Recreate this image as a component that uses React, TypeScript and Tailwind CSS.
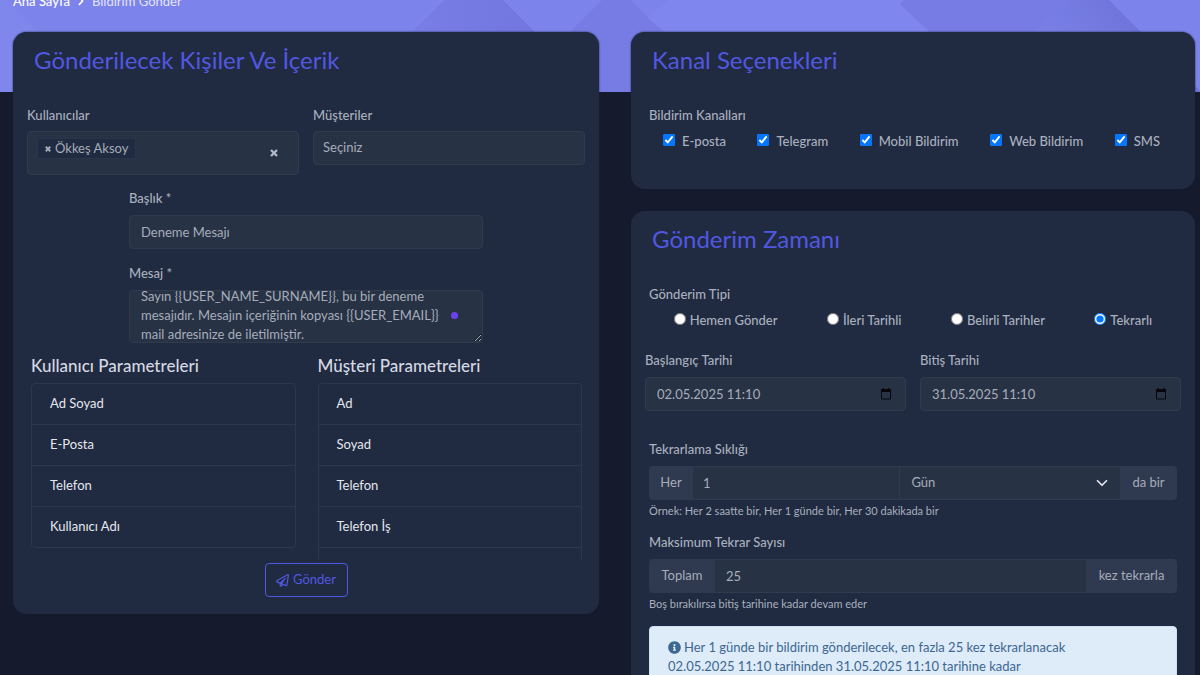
import { useEffect, useRef, useState } from "react";
import type { ReactNode } from "react";
import { FaChevronRight, FaInfoCircle, FaRegPaperPlane } from "react-icons/fa";

const channels = ["E-posta", "Telegram", "Mobil Bildirim", "Web Bildirim", "SMS"];
const sendTypes = ["Hemen Gönder", "İleri Tarihli", "Belirli Tarihler", "Tekrarlı"];
const userParams = ["Ad Soyad", "E-Posta", "Telefon", "Kullanıcı Adı"];
const customerParams = ["Ad", "Soyad", "Telefon", "Telefon İş", "E-Posta"];

const control =
  "h-[34px] w-full rounded-[4px] border border-[#303b4e] bg-[#283245] text-[13px] text-[#a6adba] outline-none focus:border-[#5158e0]";
const label = "block text-[13px] leading-[18px] font-medium text-[#a9b0bf]";
const addon =
  "flex h-[34px] shrink-0 items-center justify-center bg-[#2f394f] text-[13px] text-[#a6adba]";

function Card({ title, children }: { title: string; children: ReactNode }) {
  return (
    <section className="rounded-[14px] bg-[#202a40] shadow-[0_0_2px_#1a2236]">
      <h2 className="px-[21px] pt-[14px] text-[24px] leading-[28px] text-[#5158e0]">
        {title}
      </h2>
      {children}
    </section>
  );
}

function CloseIcon({ className }: { className: string }) {
  return (
    <svg className={className} viewBox="0 0 8 8" fill="none" stroke="currentColor">
      <path d="M1 1l6 6M7 1l-6 6" strokeWidth="2.4" />
    </svg>
  );
}

// Faceted pattern behind the page header
function HeaderPattern() {
  return (
    <svg
      className="absolute inset-0 h-full w-full"
      viewBox="0 0 1200 92"
      preserveAspectRatio="none"
    >
      <defs>
        <linearGradient id="facet">
          <stop offset="0.3" stopColor="#777de5" />
          <stop offset="1" stopColor="#6d73da" />
        </linearGradient>
        <linearGradient id="facetLight" x1="0" y1="1" x2="1" y2="0.7">
          <stop offset="0.2" stopColor="#7b82ea" />
          <stop offset="0.6" stopColor="#757ce2" />
          <stop offset="1" stopColor="#6a70d6" />
        </linearGradient>
      </defs>
      <path d="M0 0h7l92 92H0z" fill="#8087ec" />
      <path d="M444 0h59l92 92H352z" fill="url(#facet)" />
      <path d="M602 0h29l92 92H510z" fill="#767ce4" />
      <path d="M667 0h235l92 92H740L648 18z" fill="#7f86ee" />
      <path d="M904 0h163l-92 92h17l-92-88z" fill="#767ce4" />
      <path d="M1067 0h42l92 92H975z" fill="url(#facetLight)" />
    </svg>
  );
}

function ParamList({ title, items }: { title: string; items: string[] }) {
  return (
    <div>
      <h3 className="text-[17px] leading-[20px] font-medium text-[#d5d9e4]">{title}</h3>
      <div className="mt-[7px] h-[177px] overflow-hidden">
        <ul className="rounded-[4px] border border-[#2d374c]">
          {items.map((item) => (
            <li key={item} className="border-b border-[#2d374c] last:border-b-0">
              <button
                type="button"
                className="block h-10 w-full px-[18px] text-left text-[13px] text-[#e4e7ee]"
              >
                {item}
              </button>
            </li>
          ))}
        </ul>
      </div>
    </div>
  );
}

function DateField({ id, title, value }: { id: string; title: string; value: string }) {
  const [date, setDate] = useState(value);
  return (
    <div>
      <label htmlFor={id} className={label}>
        {title}
      </label>
      <div className="relative mt-2">
        <input
          id={id}
          type="text"
          value={date}
          onChange={(e) => setDate(e.target.value)}
          className={`${control} pr-9 pl-[11px]`}
        />
        <button type="button" aria-label={title} className="absolute top-[11px] right-[14px]">
          <svg className="h-3 w-3" viewBox="0 0 12 12" fill="#05070c">
            <path d="M2.5 0h1.4v1h4.2V0h1.4v1H10a1 1 0 0 1 1 1v8.5a1 1 0 0 1-1 1H2a1 1 0 0 1-1-1V2a1 1 0 0 1 1-1h.5zM2 4v6.5h8V4z" />
          </svg>
        </button>
      </div>
    </div>
  );
}

function RecipientsForm() {
  const messageRef = useRef<HTMLTextAreaElement>(null);
  const [users, setUsers] = useState(["Ökkeş Aksoy"]);

  useEffect(() => {
    if (messageRef.current) messageRef.current.scrollTop = 10;
  }, []);

  return (
    <form className="px-[14px] pb-[17px]" onSubmit={(e) => e.preventDefault()}>
      <div className="mt-8 grid grid-cols-2 items-start gap-[14px]">
        <div>
          <span className={label}>Kullanıcılar</span>
          <div className="mt-[7px] flex h-11 items-center justify-between rounded-[4px] border border-[#303b4e] bg-[#283245] pr-5 pl-[9px]">
            <div className="flex gap-1 self-start pt-[6px]">
              {users.map((user) => (
                <span
                  key={user}
                  className="flex h-[21px] items-center gap-1 rounded-[2px] border border-[#2b354a] bg-[#202a40] px-[7px] text-[13px] text-[#a6adba]"
                >
                  <button
                    type="button"
                    aria-label={`${user} kaldır`}
                    onClick={() => setUsers(users.filter((u) => u !== user))}
                  >
                    <CloseIcon className="h-[6px] w-[6px]" />
                  </button>
                  {user}
                </span>
              ))}
            </div>
            <button
              type="button"
              aria-label="Temizle"
              className="text-[#b3b9c6]"
              onClick={() => setUsers([])}
            >
              <CloseIcon className="h-2 w-2" />
            </button>
          </div>
        </div>
        <div>
          <label htmlFor="customers" className={label}>
            Müşteriler
          </label>
          <select id="customers" className={`${control} mt-[7px] appearance-none px-[9px]`}>
            <option>Seçiniz</option>
          </select>
        </div>
      </div>

      <div className="px-[102px] pt-[14px]">
        <label htmlFor="subject" className={label}>
          Başlık *
        </label>
        <input
          id="subject"
          type="text"
          defaultValue="Deneme Mesajı"
          className={`${control} mt-2 px-[11px]`}
        />
        <label htmlFor="message" className={`${label} mt-[15px]`}>
          Mesaj *
        </label>
        <div className="relative mt-2">
          <textarea
            id="message"
            ref={messageRef}
            defaultValue="Sayın {{USER_NAME_SURNAME}}, bu bir deneme mesajıdır. Mesajın içeriğinin kopyası {{USER_EMAIL}} mail adresinize de iletilmiştir."
            className="block h-[53px] w-full rounded-[4px] border border-[#303b4e] bg-[#283245] py-[6px] pr-6 pl-[11px] text-[13px] leading-[19px] text-[#a6adba] outline-none [scrollbar-width:none]"
          />
          <span className="absolute top-[22px] right-[25px] h-[7px] w-[7px] rounded-full bg-[#6c43ee]" />
        </div>
      </div>

      <div className="mt-[13px] grid grid-cols-2 gap-[22px] pr-[3px] pl-1">
        <ParamList title="Kullanıcı Parametreleri" items={userParams} />
        <ParamList title="Müşteri Parametreleri" items={customerParams} />
      </div>

      <div className="mt-[3px] flex justify-center">
        <button
          type="submit"
          className="flex h-[34px] w-[83px] items-center justify-center gap-1 rounded-[4px] border border-[#5158e0] text-[13px] text-[#5158e0]"
        >
          <FaRegPaperPlane className="h-[13px] w-[13px]" />
          Gönder
        </button>
      </div>
    </form>
  );
}

function ChannelOptions() {
  return (
    <form className="px-[18px] pt-8 pb-[39px]" onSubmit={(e) => e.preventDefault()}>
      <span id="channels" className={label}>
        Bildirim Kanalları
      </span>
      <div
        role="group"
        aria-labelledby="channels"
        className="mt-2 flex justify-between pr-[17px] pl-[14px]"
      >
        {channels.map((channel) => (
          <label
            key={channel}
            className="flex items-start gap-[7px] text-[13px] leading-[18px] font-medium text-[#a9b0bf]"
          >
            <input type="checkbox" defaultChecked className="mt-[2px] h-3 w-3" />
            {channel}
          </label>
        ))}
      </div>
    </form>
  );
}

function ScheduleForm() {
  const [sendType, setSendType] = useState("Tekrarlı");

  return (
    <form className="pb-8" onSubmit={(e) => e.preventDefault()}>
      <div className="px-[18px] pt-8">
        <span id="send-type" className={label}>
          Gönderim Tipi
        </span>
        <div role="radiogroup" aria-labelledby="send-type" className="mt-2 flex justify-around">
          {sendTypes.map((type) => (
            <label
              key={type}
              className="flex items-start gap-1 text-[13px] leading-[18px] font-medium text-[#a9b0bf]"
            >
              <input
                type="radio"
                name="sendType"
                checked={sendType === type}
                onChange={() => setSendType(type)}
                className="mt-[2px] h-3 w-3"
              />
              {type}
            </label>
          ))}
        </div>
      </div>

      <div className="mt-[22px] grid grid-cols-2 gap-[14px] px-[14px]">
        <DateField id="start" title="Başlangıç Tarihi" value="02.05.2025 11:10" />
        <DateField id="end" title="Bitiş Tarihi" value="31.05.2025 11:10" />
      </div>

      <div className="px-[18px] pt-[29px]">
        <label htmlFor="every" className={label}>
          Tekrarlama Sıklığı
        </label>
        <div className="mt-2 flex">
          <span className={`${addon} w-11 rounded-l-[4px]`}>Her</span>
          <input
            id="every"
            type="text"
            defaultValue="1"
            className="h-[34px] min-w-0 flex-[186] border-y border-[#303b4e] bg-[#283245] px-[10px] text-[13px] text-[#a6adba] outline-none"
          />
          <div className="relative flex-[220]">
            <select
              aria-label="Birim"
              className="h-[34px] w-full appearance-none border-y border-l border-[#303b4e] bg-[#283245] px-[11px] text-[13px] text-[#a6adba] outline-none"
            >
              <option>Gün</option>
              <option>Saat</option>
              <option>Dakika</option>
            </select>
            <svg
              className="pointer-events-none absolute top-[11px] right-3 h-3 w-3"
              viewBox="0 0 16 16"
              fill="none"
              stroke="#e8eaf0"
            >
              <path
                d="M2 5l6 6 6-6"
                strokeWidth="2.2"
                strokeLinecap="round"
                strokeLinejoin="round"
              />
            </svg>
          </div>
          <span className={`${addon} w-[57px] rounded-r-[4px]`}>da bir</span>
        </div>
        <p className="mt-1 text-[11px] leading-[14px] text-[#a9b0bf]">
          Örnek: Her 2 saatte bir, Her 1 günde bir, Her 30 dakikada bir
        </p>

        <label htmlFor="max" className={`${label} mt-[15px]`}>
          Maksimum Tekrar Sayısı
        </label>
        <div className="mt-2 flex">
          <span className={`${addon} w-[66px] rounded-l-[4px]`}>Toplam</span>
          <input
            id="max"
            type="text"
            defaultValue="25"
            className="h-[34px] min-w-0 flex-1 border-y border-[#303b4e] bg-[#283245] px-[11px] text-[13px] text-[#a6adba] outline-none"
          />
          <span className={`${addon} w-[91px] rounded-r-[4px]`}>kez tekrarla</span>
        </div>
        <p className="mt-1 text-[11px] leading-[14px] text-[#a9b0bf]">
          Boş bırakılırsa bitiş tarihine kadar devam eder
        </p>

        <div className="mt-[15px] rounded-[4px] border border-[#cfe0f2] bg-[#deebf8] px-[18px] py-[11px] text-[13px] leading-[19px] text-[#3c6791]">
          <p className="flex items-center gap-[3px]">
            <FaInfoCircle className="h-[13px] w-[13px] shrink-0" />
            Her 1 günde bir bildirim gönderilecek, en fazla 25 kez tekrarlanacak
          </p>
          <p>02.05.2025 11:10 tarihinden 31.05.2025 11:10 tarihine kadar</p>
        </div>
      </div>
    </form>
  );
}

function App() {
  return (
    <div className="min-h-screen bg-[#151a2c] font-['Lato',sans-serif]">
      <header className="relative h-[92px] overflow-hidden bg-[#7c83eb]">
        <HeaderPattern />
        <nav className="relative -mt-2 flex items-center gap-[6px] pl-[13px] text-[13px] leading-[18px] text-[#e3e5fb]">
          <a href="#" className="font-medium text-white">
            Ana Sayfa
          </a>
          <FaChevronRight className="h-[10px] w-[10px] text-white" />
          <span>Bildirim Gönder</span>
        </nav>
      </header>
      <main className="relative -mt-[60px] grid grid-cols-[586fr_564fr] items-start gap-8 pr-[5px] pl-[13px]">
        <Card title="Gönderilecek Kişiler Ve İçerik">
          <RecipientsForm />
        </Card>
        <div className="grid gap-[22px]">
          <Card title="Kanal Seçenekleri">
            <ChannelOptions />
          </Card>
          <Card title="Gönderim Zamanı">
            <ScheduleForm />
          </Card>
        </div>
      </main>
    </div>
  );
}

export default App;
